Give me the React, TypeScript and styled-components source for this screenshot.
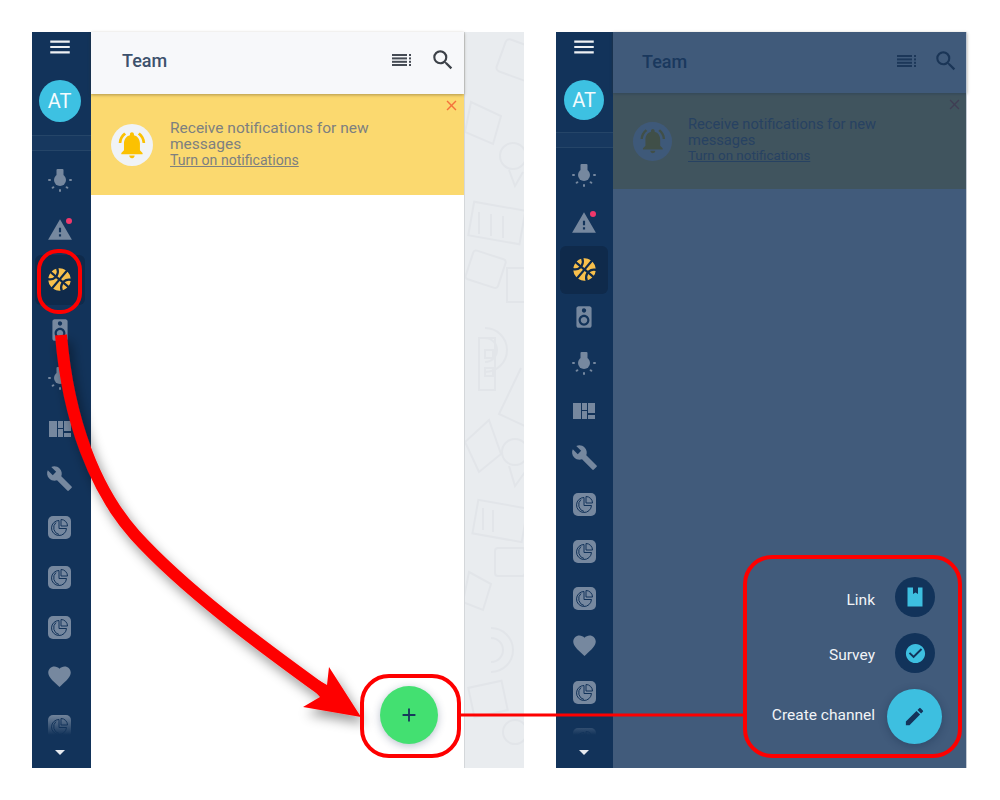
import styled, { createGlobalStyle } from 'styled-components';
import {
  MdAdd,
  MdArrowDropDown,
  MdBuild,
  MdCheckCircle,
  MdClose,
  MdCreate,
  MdFavorite,
  MdMenu,
  MdNotificationsActive,
  MdSearch,
  MdSpeaker,
  MdSportsBasketball,
  MdWarning,
} from 'react-icons/md';

const GlobalStyle = createGlobalStyle`
  html, body {
    margin: 0;
    padding: 0;
    background: #fff;
  }
  body {
    font-family: Roboto, "Liberation Sans", sans-serif;
    overflow: hidden;
  }
`;

const iconGrey = '#76889f';
const railBlue = '#12335a';

const BulbIcon = () => (
  <svg width="26" height="26" viewBox="0 0 26 26" fill={iconGrey}>
    <rect x="9.5" y="1" width="7" height="8" rx="1" />
    <circle cx="13" cy="12" r="6" />
    <rect x="1" y="11" width="3" height="2" rx="1" />
    <rect x="22" y="11" width="3" height="2" rx="1" />
    <rect x="12" y="21" width="2" height="3" rx="1" />
    <rect x="4.5" y="18.5" width="3" height="2" rx="1" transform="rotate(-35 6 19.5)" />
    <rect x="18.5" y="18.5" width="3" height="2" rx="1" transform="rotate(35 20 19.5)" />
  </svg>
);

const WaffleIcon = () => (
  <svg width="24" height="18" viewBox="0 0 24 18" fill={iconGrey}>
    <rect x="1" y="1" width="8" height="16" />
    <rect x="10" y="1" width="5" height="7" />
    <rect x="10" y="9" width="5" height="8" />
    <rect x="16" y="1" width="7" height="10" />
    <rect x="16" y="13" width="7" height="4" />
  </svg>
);

const ChartIcon = () => (
  <svg width="23" height="23" viewBox="0 0 23 23">
    <rect width="23" height="23" rx="5" fill={iconGrey} />
    <g fill="none" stroke={railBlue} strokeWidth="1">
      <path d="M11 4.5a7.5 7.5 0 1 0 7.5 8H11z" />
      <path d="M8 6.5a7 7 0 0 0 3 12" />
      <path d="M13 3.5a6.5 6.5 0 0 1 6.5 6.5H13z" />
    </g>
  </svg>
);

const ListIcon = () => (
  <svg width="20" height="12" viewBox="0 0 20 12" fill="#454b54">
    <rect y="0" width="15" height="2" />
    <rect y="3.4" width="15" height="2" />
    <rect y="6.8" width="15" height="2" />
    <rect y="10" width="15" height="2" />
    <rect x="17" y="0" width="2" height="2" />
    <rect x="17" y="3.4" width="2" height="2" />
    <rect x="17" y="6.8" width="2" height="2" />
    <rect x="17" y="10" width="2" height="2" />
  </svg>
);

const LinkIcon = () => (
  <svg width="24" height="24" viewBox="0 0 24 24" fill="currentColor">
    <path d="M4.5 2.5H10V9l2.5-1.5L15 9V2.5h4.5v19h-15z" />
  </svg>
);

type NavEntry = { id: string; icon: React.ReactNode; active?: boolean; dot?: boolean };

const navEntries: NavEntry[] = [
  { id: 'bulb-1', icon: <BulbIcon /> },
  { id: 'alert', icon: <MdWarning size={26} />, dot: true },
  { id: 'ball', icon: <MdSportsBasketball size={27} style={{ transform: 'rotate(40deg)' }} />, active: true },
  { id: 'speaker', icon: <MdSpeaker size={26} /> },
  { id: 'bulb-2', icon: <BulbIcon /> },
  { id: 'waffle', icon: <WaffleIcon /> },
  { id: 'wrench', icon: <MdBuild size={27} /> },
  { id: 'chart-1', icon: <ChartIcon /> },
  { id: 'chart-2', icon: <ChartIcon /> },
  { id: 'chart-3', icon: <ChartIcon /> },
  { id: 'heart', icon: <MdFavorite size={27} /> },
  { id: 'chart-4', icon: <ChartIcon /> },
  { id: 'chart-5', icon: <ChartIcon /> },
];

type RailProps = {
  width: number;
  inset: number;
  step: number;
  tile: number;
  avatar: number;
  avatarTop: number;
  dividerTop: number;
  listTop: number;
};

const Rail = ({ width, inset, step, tile, avatar, avatarTop, dividerTop, listTop }: RailProps) => (
  <RailBox $width={width} $inset={inset}>
    <RailButton>
      <MdMenu size={26} />
    </RailButton>
    <Avatar $size={avatar} $top={avatarTop}>
      AT
    </Avatar>
    <RailDivider $top={dividerTop} $inset={inset} />
    <RailList $top={listTop}>
      {navEntries.map((entry) => (
        <RailItem key={entry.id} $step={step}>
          <RailTile $size={tile} $active={entry.active}>
            {entry.icon}
            {entry.dot && <AlertDot />}
          </RailTile>
        </RailItem>
      ))}
    </RailList>
    <RailFooter>
      <MdArrowDropDown size={24} />
    </RailFooter>
  </RailBox>
);

type ChatPanelProps = {
  headerHeight: number;
  headerLift: number;
  bannerHeight: number;
  titleLeft: number;
  bellSize: number;
  bellLeft: number;
  textGap: number;
  iconGap: number;
  textSize: number;
  linkSize: number;
  children?: React.ReactNode;
};

const ChatPanel = ({
  headerHeight,
  headerLift,
  bannerHeight,
  titleLeft,
  bellSize,
  bellLeft,
  textGap,
  iconGap,
  textSize,
  linkSize,
  children,
}: ChatPanelProps) => (
  <Panel>
    <Header $height={headerHeight} $left={titleLeft} $lift={headerLift}>
      <Title>Team</Title>
      <HeaderActions $gap={iconGap}>
        <ListIcon />
        <MdSearch size={26} color="#3c4148" />
      </HeaderActions>
    </Header>
    <Banner $height={bannerHeight} $left={bellLeft} $gap={textGap}>
      <BellCircle $size={bellSize}>
        <MdNotificationsActive size={bellSize * 0.76} />
      </BellCircle>
      <BannerText $size={textSize}>
        Receive notifications for new messages
        <BannerLink $size={linkSize}>Turn on notifications</BannerLink>
      </BannerText>
      <BannerClose>
        <MdClose size={17} />
      </BannerClose>
    </Banner>
    {children}
  </Panel>
);

const Wallpaper = () => (
  <WallpaperBox>
    <svg width="59" height="736" viewBox="0 0 59 736" fill="none" stroke="#e2e5e9" strokeWidth="2">
      <rect x="35" y="12" width="40" height="34" rx="4" transform="rotate(20 55 29)" />
      <path d="M6 70l30 14-8 28-28-12z" />
      <circle cx="48" cy="124" r="13" />
      <path d="M44 138l6 16 8-14" />
      <rect x="6" y="174" width="52" height="34" transform="rotate(10 32 190)" />
      <path d="M14 180v22M26 182v22M38 184v22" />
      <rect x="4" y="222" width="34" height="30" rx="3" transform="rotate(18 20 236)" />
      <rect x="42" y="236" width="30" height="34" />
      <path d="M20 296a22 22 0 0 1 0 44M20 306a12 12 0 0 1 0 24" />
      <rect x="14" y="306" width="16" height="52" />
      <rect x="20" y="318" width="8" height="8" />
      <rect x="20" y="336" width="8" height="8" />
      <path d="M56 336l-22 46 26 12" />
      <path d="M0 410l24-22 12 34-22 18z" />
      <circle cx="50" cy="420" r="13" />
      <path d="M44 434l6 20 10-14" />
      <rect x="10" y="472" width="50" height="34" transform="rotate(10 35 489)" />
      <path d="M18 476v22M28 478v22" />
      <rect x="30" y="516" width="30" height="28" rx="3" />
      <path d="M4 540l22 12-8 26-20-8z" />
      <path d="M26 596a22 22 0 0 1 0 44M26 606a12 12 0 0 1 0 24" />
      <rect x="6" y="652" width="34" height="30" transform="rotate(-12 23 667)" />
      <circle cx="50" cy="700" r="12" />
    </svg>
  </WallpaperBox>
);

// Annotations painted over both screens
const Annotations = () => (
  <AnnotationLayer width="1000" height="800" viewBox="0 0 1000 800" fill="none">
    <defs>
      <filter id="arrowShadow" x="-20%" y="-20%" width="140%" height="140%">
        <feDropShadow dx="4" dy="7" stdDeviation="6" floodColor="#000" floodOpacity="0.4" />
      </filter>
    </defs>
    <g filter="url(#arrowShadow)">
      <path
        d="M61 335C68 420 95 490 135 535C185 590 260 645 325 692"
        stroke="#fe0000"
        strokeWidth="12"
      />
      <path d="M361 717L329 667L327 685L290 664L320 697L303 707Z" fill="#fe0000" />
    </g>
    <g stroke="#fe0000" strokeWidth="4">
      <rect x="39" y="251" width="41" height="61" rx="19" />
      <rect x="362" y="676" width="97" height="80" rx="27" />
      <path d="M460 715H745" strokeWidth="3" />
      <rect x="745" y="557" width="215" height="199" rx="27" />
    </g>
  </AnnotationLayer>
);

const App = () => (
  <>
    <GlobalStyle />
    <Page>
      <Screen $width={492}>
        <Rail
          width={59}
          inset={4}
          step={49.6}
          tile={50}
          avatar={42}
          avatarTop={18}
          dividerTop={13}
          listTop={5}
        />
        <PanelSlot $width={373}>
          <ChatPanel
            headerHeight={62}
            headerLift={6}
            bannerHeight={101}
            titleLeft={31}
            bellSize={42}
            bellLeft={20}
            textGap={17}
            iconGap={18}
            textSize={15.5}
            linkSize={14.1}
          >
            <Fab>
              <MdAdd size={22} />
            </Fab>
          </ChatPanel>
        </PanelSlot>
        <Wallpaper />
      </Screen>
      <Screen $width={411}>
        <Rail
          width={57}
          inset={1}
          step={47}
          tile={48}
          avatar={40}
          avatarTop={18}
          dividerTop={12}
          listTop={4}
        />
        <PanelSlot $width={354}>
          <ChatPanel
            headerHeight={61}
            headerLift={3}
            bannerHeight={96}
            titleLeft={29}
            bellSize={39}
            bellLeft={20}
            textGap={16}
            iconGap={16}
            textSize={14.7}
            linkSize={13.4}
          />
          <Scrim />
          <SpeedDial>
            <DialRow>
              <DialLabel $nudge={6}>Link</DialLabel>
              <DialButton>
                <LinkIcon />
              </DialButton>
            </DialRow>
            <DialRow>
              <DialLabel $nudge={3}>Survey</DialLabel>
              <DialButton>
                <MdCheckCircle size={23} />
              </DialButton>
            </DialRow>
            <DialRow $main>
              <DialLabel $nudge={-4}>Create channel</DialLabel>
              <DialMain>
                <MdCreate size={23} />
              </DialMain>
            </DialRow>
          </SpeedDial>
        </PanelSlot>
      </Screen>
      <Annotations />
    </Page>
  </>
);

const Page = styled.div`
  position: relative;
  display: flex;
  gap: 32px;
  width: 1000px;
  height: 800px;
  padding: 32px;
  box-sizing: border-box;
  overflow: hidden;
`;

const Screen = styled.div<{ $width: number }>`
  display: flex;
  flex: none;
  width: ${(p) => p.$width}px;
  height: 736px;
`;

const RailBox = styled.nav<{ $width: number; $inset: number }>`
  display: flex;
  flex-direction: column;
  align-items: center;
  flex: none;
  box-sizing: border-box;
  width: ${(p) => p.$width}px;
  height: 736px;
  padding-right: ${(p) => p.$inset}px;
  background: ${railBlue};
  color: ${iconGrey};
`;

const RailButton = styled.div`
  display: flex;
  align-items: center;
  justify-content: center;
  flex: none;
  height: 30px;
  color: #eef1f4;
`;

const Avatar = styled.div<{ $size: number; $top: number }>`
  display: flex;
  align-items: center;
  justify-content: center;
  flex: none;
  width: ${(p) => p.$size}px;
  height: ${(p) => p.$size}px;
  margin-top: ${(p) => p.$top}px;
  border-radius: 50%;
  background: #3dc1e2;
  color: #f2fbfe;
  font-size: 20px;
`;

const RailDivider = styled.div<{ $top: number; $inset: number }>`
  flex: none;
  align-self: stretch;
  height: 14px;
  margin-top: ${(p) => p.$top}px;
  margin-right: -${(p) => p.$inset}px;
  background: #17385f;
  border-top: 1px solid #254568;
  border-bottom: 1px solid #254568;
`;

const RailList = styled.div<{ $top: number }>`
  position: relative;
  flex: 1;
  align-self: stretch;
  min-height: 0;
  margin-top: ${(p) => p.$top}px;
  overflow: hidden;

  &::after {
    content: '';
    position: absolute;
    left: 0;
    right: 0;
    bottom: 0;
    height: 26px;
    background: linear-gradient(rgba(18, 51, 90, 0), ${railBlue} 80%);
  }
`;

const RailItem = styled.div<{ $step: number }>`
  display: flex;
  align-items: center;
  justify-content: center;
  height: ${(p) => p.$step}px;
`;

const RailTile = styled.div<{ $size: number; $active?: boolean }>`
  position: relative;
  display: flex;
  align-items: center;
  justify-content: center;
  flex: none;
  width: ${(p) => p.$size}px;
  height: ${(p) => p.$size}px;
  border-radius: 6px;
  background: ${(p) => (p.$active ? '#0f2a4b' : 'transparent')};
  color: ${(p) => (p.$active ? '#f8c04c' : iconGrey)};
`;

const AlertDot = styled.span`
  position: absolute;
  top: 12.5px;
  right: 12.5px;
  width: 6px;
  height: 6px;
  border-radius: 50%;
  background: #f0386b;
`;

const RailFooter = styled.div`
  display: flex;
  align-items: center;
  justify-content: center;
  flex: none;
  height: 24px;
  margin-bottom: 4px;
  color: #e6eaef;
`;

const PanelSlot = styled.div<{ $width: number }>`
  position: relative;
  flex: none;
  width: ${(p) => p.$width}px;
  height: 736px;
`;

const Panel = styled.main`
  position: relative;
  display: flex;
  flex-direction: column;
  height: 100%;
  background: #fff;
`;

const Header = styled.header<{ $height: number; $left: number; $lift: number }>`
  position: relative;
  z-index: 1;
  display: flex;
  align-items: center;
  justify-content: space-between;
  flex: none;
  box-sizing: border-box;
  height: ${(p) => p.$height}px;
  padding: 0 8px ${(p) => p.$lift}px ${(p) => p.$left}px;
  background: #f7f8fa;
  box-shadow: 0 1px 3px rgba(60, 50, 20, 0.4);
`;

const Title = styled.h1`
  margin: 0;
  color: #3d516c;
  font-size: 18px;
  font-weight: 500;
`;

const HeaderActions = styled.div<{ $gap: number }>`
  display: flex;
  align-items: center;
  gap: ${(p) => p.$gap}px;
`;

const Banner = styled.section<{ $height: number; $left: number; $gap: number }>`
  position: relative;
  display: flex;
  align-items: center;
  gap: ${(p) => p.$gap}px;
  flex: none;
  height: ${(p) => p.$height}px;
  padding: 0 60px 0 ${(p) => p.$left}px;
  box-sizing: border-box;
  background: #fbd96f;
`;

const BellCircle = styled.div<{ $size: number }>`
  display: flex;
  align-items: center;
  justify-content: center;
  flex: none;
  width: ${(p) => p.$size}px;
  height: ${(p) => p.$size}px;
  border-radius: 50%;
  background: #f0f3f6;
  color: #fbc102;
`;

const BannerText = styled.div<{ $size: number }>`
  width: 215px;
  margin-bottom: 2px;
  color: #7d8080;
  font-size: ${(p) => p.$size}px;
  line-height: 16px;
`;

const BannerLink = styled.a<{ $size: number }>`
  display: block;
  font-size: ${(p) => p.$size}px;
  text-decoration: underline;
`;

const BannerClose = styled.div`
  position: absolute;
  top: 3px;
  right: 4px;
  display: flex;
  color: #f4713c;
`;

const Fab = styled.button`
  position: absolute;
  right: 26px;
  bottom: 24px;
  display: flex;
  align-items: center;
  justify-content: center;
  width: 58px;
  height: 58px;
  padding: 0;
  border: 0;
  border-radius: 50%;
  background: #43e071;
  color: #17395c;
  box-shadow: 0 2px 8px rgba(30, 50, 90, 0.3);
`;

const WallpaperBox = styled.aside`
  flex: 1;
  height: 736px;
  overflow: hidden;
  background: #e9ecef;
  border-left: 1px solid #d4d7da;
  box-sizing: border-box;

  svg {
    filter: blur(0.6px);
  }
`;

const Scrim = styled.div`
  position: absolute;
  inset: 0;
  z-index: 2;
  background: rgba(17, 50, 90, 0.8);
  border-right: 1px solid #c3cad3;
`;

const SpeedDial = styled.div`
  position: absolute;
  right: 25px;
  bottom: 24px;
  z-index: 3;
  display: flex;
  flex-direction: column;
  align-items: flex-end;
  gap: 16px;
`;

const DialRow = styled.div<{ $main?: boolean }>`
  display: flex;
  align-items: center;
  gap: ${(p) => (p.$main ? 12 : 20)}px;
  margin-right: ${(p) => (p.$main ? 0 : 7)}px;
`;

const DialLabel = styled.span<{ $nudge: number }>`
  margin-top: ${(p) => Math.max(p.$nudge, 0)}px;
  margin-bottom: ${(p) => Math.max(-p.$nudge, 0)}px;
  color: #f1f4f7;
  font-size: 15.5px;
`;

const DialButton = styled.button`
  display: flex;
  align-items: center;
  justify-content: center;
  width: 40px;
  height: 40px;
  padding: 0;
  border: 0;
  border-radius: 50%;
  background: ${railBlue};
  color: #3dbfe0;
`;

const DialMain = styled.button`
  display: flex;
  align-items: center;
  justify-content: center;
  width: 55px;
  height: 55px;
  padding: 0;
  border: 0;
  border-radius: 50%;
  background: #3dbfe0;
  color: #14345b;
  box-shadow: 0 2px 8px rgba(10, 30, 60, 0.3);
`;

const AnnotationLayer = styled.svg`
  position: absolute;
  top: 0;
  left: 0;
  z-index: 5;
  pointer-events: none;
`;

export default App;
